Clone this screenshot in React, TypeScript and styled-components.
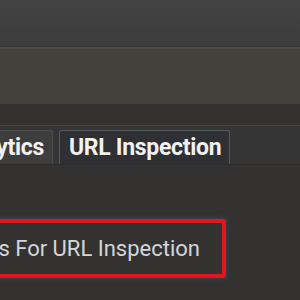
import styled, { createGlobalStyle } from 'styled-components';

const GlobalStyle = createGlobalStyle`
  html, body {
    margin: 0;
    padding: 0;
    background: #333231;
  }
  body {
    width: 300px;
    height: 300px;
    overflow: hidden;
    font-family: Roboto, "Liberation Sans", sans-serif;
  }
`;

const Page = styled.div`
  width: 300px;
  height: 300px;
  display: flex;
  flex-direction: column;
  overflow: hidden;
`;

const TopBar = styled.div`
  height: 46px;
  flex: none;
  background: linear-gradient(#434343, #3c3c3c);
  border-bottom: 1px solid #353535;
`;

const Panel = styled.div`
  height: 55px;
  flex: none;
  background: #42413c;
  border-top: 2px solid #4b4b49;
`;

const Content = styled.div`
  flex: 1;
  background: #333231;
  padding-top: 21px;
`;

const TabStrip = styled.div`
  height: 38px;
  display: flex;
  align-items: flex-end;
  gap: 6px;
  background: #353535;
  border-top: 1px solid #454545;
  border-bottom: 1px solid #2c2c2c;
  margin-left: -59px;
`;

const Tab = styled.div<{ $active?: boolean }>`
  height: 34px;
  box-sizing: border-box;
  padding: 0 8px 0 9px;
  display: flex;
  align-items: center;
  border: 1px solid ${p => (p.$active ? '#56585a' : '#4c4c4c')};
  border-bottom: none;
  border-radius: 3px 3px 0 0;
  background: ${p => (p.$active ? '#2e3034' : '#3d3d3d')};
  color: #f2f2f2;
  font-size: 23px;
  font-weight: 700;
  letter-spacing: -0.3px;
  white-space: nowrap;
`;

const CalloutRow = styled.div`
  display: flex;
  justify-content: flex-end;
  width: 226px;
  margin-top: 54px;
`;

const Callout = styled.div`
  flex: none;
  height: 59px;
  box-sizing: border-box;
  border: 4px solid #e6141c;
  border-radius: 3px;
  box-shadow: 0 0 4px 2px rgba(70, 80, 100, 0.35);
  display: flex;
  align-items: center;
  padding: 0 22px 0 12px;
  color: #d6d6d6;
  font-size: 22px;
  font-weight: 400;
  white-space: nowrap;
`;

export default function App() {
  return (
    <Page>
      <GlobalStyle />
      <TopBar />
      <Panel />
      <Content>
        <TabStrip>
          <Tab>Analytics</Tab>
          <Tab $active>URL Inspection</Tab>
        </TabStrip>
        <CalloutRow>
          <Callout>Check Settings For URL Inspection</Callout>
        </CalloutRow>
      </Content>
    </Page>
  );
}
